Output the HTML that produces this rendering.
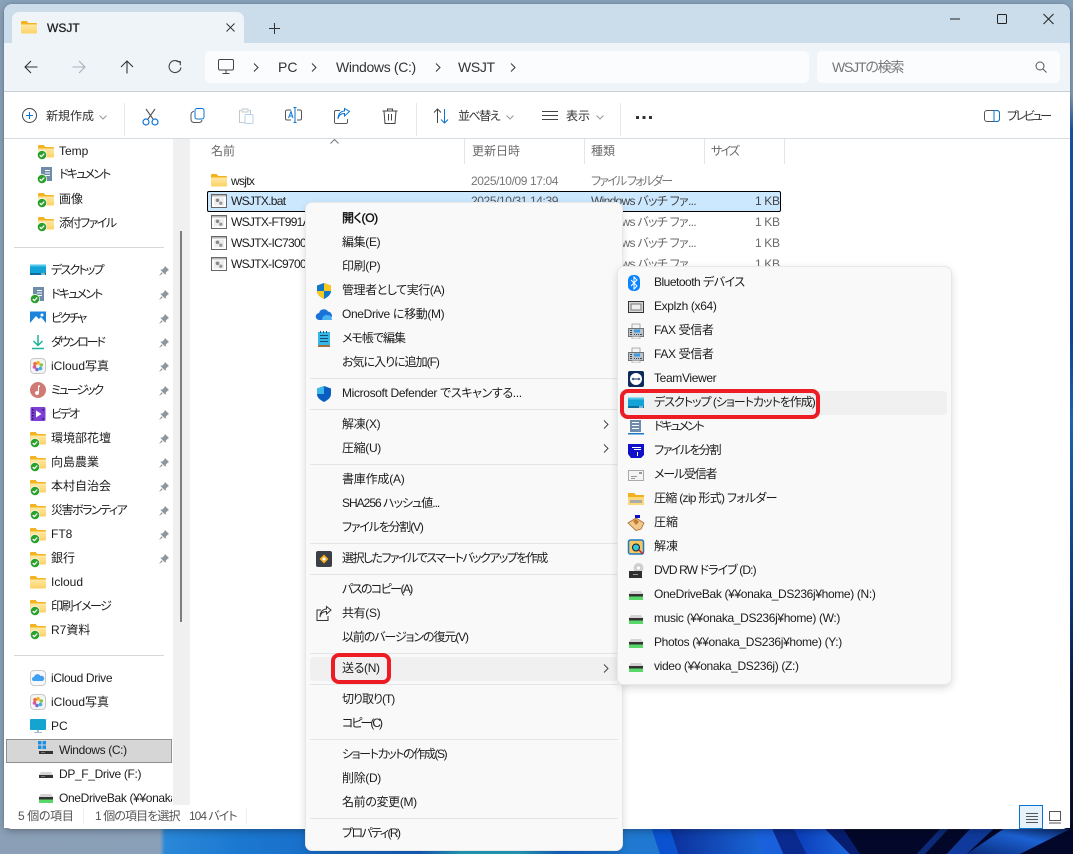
<!DOCTYPE html>
<html lang="ja"><head><meta charset="utf-8"><title>WSJT</title>
<style>
html,body{margin:0;padding:0}
body{width:1073px;height:854px;overflow:hidden;position:relative;background:#8ba3ba;font-family:"Liberation Sans","Noto Sans CJK JP",sans-serif;font-size:12px;color:#1c1c1c;font-feature-settings:"palt"}
div,svg,span.t{position:absolute}
.t{position:absolute;white-space:nowrap;line-height:16px;height:16px}
.g{color:#6a6a6a}
.h{color:#555}
.i{width:16px;height:16px}
.m{background:#e5e5e5;height:1px}
.a{letter-spacing:-.35px}
.b{letter-spacing:-.7px}
.c{letter-spacing:-1px}
.d{letter-spacing:-1.2px}
.e{letter-spacing:-1.5px}
.f{letter-spacing:-1.8px}
.j{letter-spacing:-2.1px}
svg{overflow:visible}
</style></head><body>
<svg width="0" height="0" style="position:absolute"><defs>
<linearGradient id="fg" x1="0" y1="0" x2="0" y2="1"><stop offset="0" stop-color="#ffe9a6"/><stop offset="1" stop-color="#fdd164"/></linearGradient>
<symbol id="f" viewBox="0 0 16 16"><path d="M0 3a1 1 0 0 1 1-1h4.500l2 2H15a1 1 0 0 1 1 1V7H0z" fill="#f3b320"/><path d="M0 5.500h16v8a1 1 0 0 1-1 1H1a1 1 0 0 1-1-1z" fill="url(#fg)"/></symbol>
<symbol id="c" viewBox="0 0 10 10"><circle cx="5" cy="5" r="5" fill="#fff"/><circle cx="5" cy="5" r="4.300" fill="#2c9e2c"/><path d="M2.800 5.100l1.500 1.500 3-3" fill="none" stroke="#fff" stroke-width="1.200"/></symbol>
<symbol id="d" viewBox="0 0 16 16"><path d="M3 1h11v14H3z" fill="#6f8cab"/><path d="M7 4h5v1H7zM7 6.500h5v1H7zM6 9h6v1H6z" fill="#fff"/></symbol>
<symbol id="p" viewBox="0 0 12 12"><path d="M7 1l4 4-1.200.6-2 2.200-.3 2.200L2.200 4.800l2.200-.3 2-2zM3.500 7.200L1 11l3.800-2.500z" fill="#8d969d"/></symbol>
<symbol id="dk" viewBox="0 0 16 16"><path d="M0 2.500h16v10.500H0z" fill="#14a3d6"/><path d="M0 2.500h16v2H0z" fill="#4fc6e8"/><path d="M0 11h16v2H0z" fill="#0b6f9c"/><path d="M11 11.500h4v1h-4z" fill="#fff"/></symbol>
<symbol id="wb" viewBox="0 0 16 16"><path d="M0 1.500h16v13H0z" fill="#1b84dd"/><path d="M0 13l6-7 3 3 2-2 5 6v1.500H0z" fill="#fff"/><circle cx="12" cy="5" r="1.500" fill="#fff"/></symbol>
<symbol id="dl" viewBox="0 0 16 16"><path d="M8 1v10M3.500 7L8 11.500 12.500 7" fill="none" stroke="#1eb39c" stroke-width="1.500"/><path d="M2 14.500h12" stroke="#1eb39c" stroke-width="1.500"/></symbol>
<symbol id="ph" viewBox="0 0 16 16"><rect x=".5" y=".5" width="15" height="15" rx="3.500" fill="#f4f4f4" stroke="#c9c9c9"/><circle cx="8" cy="4.800" r="1.800" fill="#f3b320"/><circle cx="11.200" cy="7" r="1.800" fill="#8bc34a"/><circle cx="10.500" cy="10.500" r="1.800" fill="#3bb3d8"/><circle cx="7" cy="11.500" r="1.800" fill="#7a6bd0"/><circle cx="4.500" cy="9" r="1.800" fill="#d8559a"/><circle cx="5" cy="5.800" r="1.800" fill="#ef6b3f"/></symbol>
<symbol id="mu" viewBox="0 0 16 16"><circle cx="8" cy="8" r="8" fill="#d07a74"/><path d="M8 3.500h2V5H9v6a2 2 0 1 1-1-1.700z" fill="#fff"/></symbol>
<symbol id="vd" viewBox="0 0 16 16"><rect x=".5" y="1" width="15" height="14" rx="1.500" fill="#7d3fd3"/><path d="M6 4.500l5.500 3.500L6 11.500z" fill="#fff"/><path d="M2 3h1.500v1.500H2zM2 6h1.500v1.500H2zM2 9h1.500v1.500H2zM2 12h1.500v1.500H2zM12.500 3H14v1.500h-1.500zM12.500 12H14v1.500h-1.500z" fill="#2b1a55"/></symbol>
<symbol id="dr" viewBox="0 0 16 16"><path d="M3 6h10l2 3v3H1V9z" fill="#d4d4d4"/><path d="M1 9h14v3H1z" fill="#333"/><path d="M3 10h4v1H3z" fill="#777"/></symbol>
<symbol id="nd" viewBox="0 0 16 16"><path d="M3 4h10l2 2.500V8H1V6.500z" fill="#d4d4d4"/><path d="M1 7h14v2.500H1z" fill="#333"/><path d="M1 9.500h14V13H1z" fill="#58d868"/></symbol>
<symbol id="bat" viewBox="0 0 16 14"><path d="M.5.500h15v13H.5z" fill="#fff" stroke="#666"/><path d="M1 1h14v1.500H1z" fill="#b5b5b5"/><path d="M3 3.500h10v8H3z" fill="#eee"/><circle cx="6.500" cy="6.300" r="1.800" fill="#888"/><circle cx="9.800" cy="9.200" r="1.700" fill="#9a9a9a"/></symbol>
<symbol id="fx" viewBox="0 0 16 16"><path d="M4 1h8v5H4z" fill="#f4f4f4" stroke="#999" stroke-width=".8"/><path d="M.5 5.500h15v8H.5z" fill="#bcc3c8" stroke="#6f767b"/><path d="M6 6.500h6v3H6z" fill="#3d9ae0"/><path d="M2 7h2v1H2zM2 9h2v1H2zM2 11h2v1H2zM6 11h1v1H6zM8 11h1v1H8zM10 11h1v1h-1zM12 11h2v1h-2z" fill="#444"/><path d="M4 13.500h8V16H4z" fill="#eee" stroke="#999" stroke-width=".6"/></symbol>
<linearGradient id="b1" x1="0" y1="0" x2="1" y2="0"><stop offset="0" stop-color="#0b2f9a"/><stop offset="1" stop-color="#1a68d8"/></linearGradient>
<linearGradient id="b2" x1="0" y1="0" x2="1" y2="0"><stop offset="0" stop-color="#0a3ab8"/><stop offset="1" stop-color="#1c66dc"/></linearGradient>
<linearGradient id="b3" x1="0" y1="1" x2="1" y2="0"><stop offset="0" stop-color="#0a2a78"/><stop offset=".6" stop-color="#1c62d4"/><stop offset="1" stop-color="#0b2560"/></linearGradient>
</defs></svg>

<!-- wallpaper -->
<div style="left:1068px;top:0;width:5px;height:854px;background:linear-gradient(#89a3bb 0,#89a3bb 95px,#1857b4 130px,#0f4aa6 340px,#1b6fc4 420px,#0b3c8c 600px,#07183f 700px,#030a28 854px)"></div>
<div style="left:0;top:824px;width:1073px;height:30px;background:linear-gradient(90deg,#8ba0b6 0,#8aa0b8 160px,#2a88d8 165px,#1b78d0 240px,#1560c0 420px,#25a0c0 460px,#25a0c0 520px,#1566c8 560px,#1c78d4 640px)"></div>
<svg style="left:620px;top:824px" width="453" height="30" viewBox="0 0 1359 90"><path d="M660 0h699v90H660z" fill="#03082a"/><path d="M0 0h90l30 90H0z" fill="#2078d0"/><path d="M90 0h55l30 90h-55z" fill="#0a52d0"/><path d="M145 0h255l40 90H175z" fill="url(#b1)"/><path d="M400 0h50l40 90h-55z" fill="#1a60dc"/><path d="M450 0h65l45 90h-70z" fill="#0a2a90"/><path d="M515 0h85l90 90H560z" fill="url(#b2)"/><path d="M600 0h60l60 90h-30z" fill="#071d70"/><path d="M960 15h25l-70 75h-25z" fill="#0c2a78"/><path d="M1050 15h70l-80 75h-60z" fill="#0f3a9c"/><path d="M1150 15h200l-150 75h-160z" fill="url(#b3)"/></svg>
<div style="left:0;top:0;width:1073px;height:3px;background:#87a2ba"></div>

<!-- window -->
<div style="left:4px;top:4px;width:1066px;height:825px;background:#fff;border-radius:8px;overflow:hidden;box-shadow:0 0 1px #5b6b7a,0 2px 8px rgba(0,0,0,.3)"></div>
<div style="left:4px;top:4px;width:1066px;height:39px;background:#cbdcea;border-radius:8px 8px 0 0"></div>
<div style="left:4px;top:43px;width:1066px;height:48px;background:#eff4f9;border-bottom:1px solid #c5d0d9"></div>
<div style="left:12px;top:12px;width:232px;height:32px;background:#eff4f9;border-radius:7px 7px 0 0"></div>
<svg class="i" style="left:21px;top:19px"><use href="#f"/></svg>
<span class="t" style="left:47px;top:20px;color:#222;-webkit-text-stroke:.3px #222">WSJT</span>
<svg style="left:226px;top:23px" width="10" height="10"><path d="M.5.500l8 8M8.500.500l-8 8" stroke="#333" stroke-width="1"/></svg>
<svg style="left:269px;top:23px" width="11" height="11"><path d="M5.500 0v11M0 5.500h11" stroke="#333" stroke-width="1"/></svg>
<svg style="left:950px;top:13px" width="108" height="12"><path d="M0 6h10" stroke="#222" stroke-width="1"/><rect x="47.500" y="1.500" width="9" height="9" rx="1" fill="none" stroke="#222" stroke-width="1"/><path d="M93.500 1l10 10M103.500 1l-10 10" stroke="#222" stroke-width="1"/></svg>

<!-- nav -->
<svg style="left:24px;top:60px" width="14" height="14"><path d="M13.500 7H1M7 1L1 7l6 6" fill="none" stroke="#333" stroke-width="1.100"/></svg>
<svg style="left:72px;top:60px" width="14" height="14"><path d="M.5 7H13M7 1l6 6-6 6" fill="none" stroke="#a9b0b6" stroke-width="1.100"/></svg>
<svg style="left:120px;top:60px" width="14" height="14"><path d="M7 13.500V1M1 7l6-6 6 6" fill="none" stroke="#333" stroke-width="1.100"/></svg>
<svg style="left:168px;top:60px" width="14" height="14"><path d="M11.500 2.500A6 6 0 1 0 13 7.500M8.500 1.500h3.800v3.800" fill="none" stroke="#444" stroke-width="1.100"/></svg>
<div style="left:205px;top:51px;width:604px;height:32px;background:#fbfcfe;border-radius:5px"></div>
<div style="left:817px;top:51px;width:243px;height:32px;background:#fbfcfe;border-radius:5px"></div>
<svg style="left:218px;top:59px" width="16" height="16"><rect x=".5" y=".5" width="15" height="10.500" rx="1.500" fill="none" stroke="#444"/><path d="M8 11v3M4.500 14.500h7" stroke="#444"/></svg>
<svg style="left:253px;top:63px" width="6" height="9"><path d="M1 .5l4 4-4 4" fill="none" stroke="#333"/></svg>
<span class="t" style="left:278px;top:59px;font-size:14px;color:#333">PC</span>
<svg style="left:311px;top:63px" width="6" height="9"><path d="M1 .5l4 4-4 4" fill="none" stroke="#333"/></svg>
<span class="t a" style="left:336px;top:59px;font-size:14px;color:#333">Windows (C:)</span>
<svg style="left:435px;top:63px" width="6" height="9"><path d="M1 .5l4 4-4 4" fill="none" stroke="#333"/></svg>
<span class="t a" style="left:458px;top:59px;font-size:14px;color:#333">WSJT</span>
<svg style="left:510px;top:63px" width="6" height="9"><path d="M1 .5l4 4-4 4" fill="none" stroke="#333"/></svg>
<span class="t d" style="left:832px;top:59px;font-size:14px;color:#777">WSJTの検索</span>
<svg style="left:1035px;top:61px" width="12" height="12"><circle cx="5" cy="5" r="4" fill="none" stroke="#555"/><path d="M8 8l3.500 3.500" stroke="#555"/></svg>

<!-- command bar -->
<div style="left:4px;top:138px;width:1066px;height:1px;background:#d5dde3"></div>
<svg class="i" style="left:22px;top:108px"><circle cx="7.500" cy="7.500" r="7" fill="none" stroke="#444"/><path d="M7.500 4v7M4 7.500h7" stroke="#0a74d4" stroke-width="1.100"/></svg>
<span class="t" style="left:46px;top:108px;color:#333">新規作成</span>
<svg style="left:99px;top:115px" width="8" height="5"><path d="M.5.500l3.500 3.500L7.500.500" fill="none" stroke="#999"/></svg>
<div style="left:124px;top:103px;width:1px;height:33px;background:#e6e6e6"></div>
<svg class="i" style="left:142px;top:108px;width:18px;height:18px"><path d="M4 1l7 10M13 1L6 11" fill="none" stroke="#555" stroke-width="1.100"/><circle cx="4" cy="14" r="3" fill="none" stroke="#0a74d4" stroke-width="1.200"/><circle cx="13" cy="14" r="3" fill="none" stroke="#0a74d4" stroke-width="1.200"/></svg>
<svg class="i" style="left:190px;top:108px"><rect x="5" y=".5" width="9" height="10.500" rx="2" fill="none" stroke="#0a74d4"/><path d="M4 3.500a3 3 0 0 0-3 3v5a3 3 0 0 0 3 3h5a3 3 0 0 0 3-2.500" fill="none" stroke="#555"/></svg>
<svg class="i" style="left:238px;top:108px"><path d="M3 2.500H1.500v12h5M11 2.500h1.500V6" fill="none" stroke="#c3c8cc"/><rect x="4" y="1" width="6" height="3" fill="none" stroke="#c3c8cc"/><rect x="7" y="6.500" width="8" height="9" rx="1" fill="none" stroke="#b5d3ec"/></svg>
<svg class="i" style="left:285px;top:107px;width:18px;height:18px"><path d="M6 3H2a1.500 1.500 0 0 0-1.500 1.500v7A1.500 1.500 0 0 0 2 13h4M12 3h3a1.500 1.500 0 0 1 1.500 1.500v7A1.500 1.500 0 0 1 15 13h-3" fill="none" stroke="#555"/><path d="M10 .5v15M8.500.500h3M8.500 15.500h3" stroke="#0a74d4" fill="none"/><path d="M3.500 11L6 4.500 8 11M4.300 9h3" fill="none" stroke="#0a74d4"/></svg>
<svg class="i" style="left:334px;top:108px"><path d="M6 2.500H2A1.500 1.500 0 0 0 .5 4v10A1.500 1.500 0 0 0 2 15.500h10a1.500 1.500 0 0 0 1.500-1.500v-3" fill="none" stroke="#555"/><path d="M4 11c.5-3.500 3-5.500 6.500-5.500V8l5-4.500L10.500 .5V3C7 3 4 6 4 11z" fill="none" stroke="#0a74d4"/></svg>
<svg class="i" style="left:382px;top:108px"><path d="M.5 3h15M5.500 3V1h5v2M2 3l1 12.500h10L14 3M6.500 6v6.500M9.500 6v6.500" fill="none" stroke="#444"/></svg>
<div style="left:416px;top:103px;width:1px;height:33px;background:#e6e6e6"></div>
<svg class="i" style="left:433px;top:108px"><path d="M4.500 15V1M1 4.500l3.500-3.500L8 4.500" fill="none" stroke="#444"/><path d="M11.500 1v14M8 11.500l3.500 3.500 3.500-3.500" fill="none" stroke="#0a74d4"/></svg>
<span class="t e" style="left:458px;top:108px;color:#333">並べ替え</span>
<svg style="left:506px;top:115px" width="8" height="5"><path d="M.5.500l3.500 3.500L7.500.500" fill="none" stroke="#999"/></svg>
<svg class="i" style="left:542px;top:108px"><path d="M0 3.500h16M0 7.500h16M0 11.500h16" stroke="#444"/></svg>
<span class="t" style="left:566px;top:108px;color:#333">表示</span>
<svg style="left:596px;top:115px" width="8" height="5"><path d="M.5.500l3.500 3.500L7.500.500" fill="none" stroke="#999"/></svg>
<div style="left:620px;top:103px;width:1px;height:33px;background:#e6e6e6"></div>
<svg style="left:636px;top:116px" width="16" height="3"><path d="M0 0h3v3H0zM6.500 0h3v3h-3zM13 0h3v3h-3z" fill="#333"/></svg>
<svg class="i" style="left:984px;top:108px"><rect x=".5" y="2.500" width="15" height="11" rx="2.500" fill="none" stroke="#555"/><path d="M10 2.500h3a2.500 2.500 0 0 1 2.500 2.500v6a2.500 2.500 0 0 1-2.500 2.500h-3z" fill="none" stroke="#0a74d4"/></svg>
<span class="t" style="left:1007px;top:108px;color:#333;letter-spacing:-2.4px">プレビュー</span>

<!-- sidebar scroll -->
<div style="left:173px;top:139px;width:16px;height:666px;background:#f0f0f0"></div>
<div style="left:180px;top:231px;width:2px;height:391px;background:#7e7e7e"></div>
<div style="left:189px;top:139px;width:1px;height:666px;background:#f2f2f2"></div>

<!-- sidebar items -->
<svg class="i" style="left:38px;top:143px"><use href="#f"/></svg><svg style="left:37px;top:150px" width="10" height="10"><use href="#c"/></svg><span class="t" style="left:59px;top:143px">Temp</span>
<svg class="i" style="left:38px;top:166px"><use href="#d"/></svg><svg style="left:37px;top:174px" width="10" height="10"><use href="#c"/></svg><span class="t f" style="left:59px;top:166px">ドキュメント</span>
<svg class="i" style="left:38px;top:191px"><use href="#f"/></svg><svg style="left:37px;top:198px" width="10" height="10"><use href="#c"/></svg><span class="t" style="left:59px;top:191px">画像</span>
<svg class="i" style="left:38px;top:215px"><use href="#f"/></svg><svg style="left:37px;top:222px" width="10" height="10"><use href="#c"/></svg><span class="t e" style="left:59px;top:215px">添付ファイル</span>
<div style="left:14px;top:247px;width:150px;height:1px;background:#d8d8d8"></div>

<svg class="i" style="left:30px;top:262px"><use href="#dk"/></svg><span class="t f" style="left:51px;top:262px">デスクトップ</span>
<svg class="i" style="left:30px;top:286px"><use href="#d"/></svg><svg style="left:30px;top:294px" width="10" height="10"><use href="#c"/></svg><span class="t f" style="left:51px;top:286px">ドキュメント</span>
<svg class="i" style="left:30px;top:310px"><use href="#wb"/></svg><span class="t j" style="left:51px;top:310px">ピクチャ</span>
<svg class="i" style="left:30px;top:334px"><use href="#dl"/></svg><span class="t j" style="left:51px;top:334px">ダウンロード</span>
<svg class="i" style="left:30px;top:358px"><use href="#ph"/></svg><span class="t" style="left:51px;top:358px">iCloud写真</span>
<svg class="i" style="left:30px;top:382px"><use href="#mu"/></svg><span class="t j" style="left:51px;top:382px">ミュージック</span>
<svg class="i" style="left:30px;top:406px"><use href="#vd"/></svg><span class="t j" style="left:51px;top:406px">ビデオ</span>
<svg class="i" style="left:30px;top:430px"><use href="#f"/></svg><svg style="left:30px;top:438px" width="10" height="10"><use href="#c"/></svg><span class="t" style="left:51px;top:430px">環境部花壇</span>
<svg class="i" style="left:30px;top:454px"><use href="#f"/></svg><svg style="left:30px;top:462px" width="10" height="10"><use href="#c"/></svg><span class="t" style="left:51px;top:454px">向島農業</span>
<svg class="i" style="left:30px;top:478px"><use href="#f"/></svg><svg style="left:30px;top:486px" width="10" height="10"><use href="#c"/></svg><span class="t" style="left:51px;top:478px">本村自治会</span>
<svg class="i" style="left:30px;top:502px"><use href="#f"/></svg><svg style="left:30px;top:510px" width="10" height="10"><use href="#c"/></svg><span class="t e" style="left:51px;top:502px">災害ボランティア</span>
<svg class="i" style="left:30px;top:526px"><use href="#f"/></svg><svg style="left:30px;top:534px" width="10" height="10"><use href="#c"/></svg><span class="t" style="left:51px;top:526px">FT8</span>
<svg class="i" style="left:30px;top:550px"><use href="#f"/></svg><svg style="left:30px;top:558px" width="10" height="10"><use href="#c"/></svg><span class="t" style="left:51px;top:550px">銀行</span>
<svg class="i" style="left:30px;top:574px"><use href="#f"/></svg><span class="t" style="left:51px;top:574px">Icloud</span>
<svg class="i" style="left:30px;top:598px"><use href="#f"/></svg><svg style="left:30px;top:606px" width="10" height="10"><use href="#c"/></svg><span class="t e" style="left:51px;top:598px">印刷イメージ</span>
<svg class="i" style="left:30px;top:622px"><use href="#f"/></svg><svg style="left:30px;top:630px" width="10" height="10"><use href="#c"/></svg><span class="t" style="left:51px;top:622px">R7資料</span>
<svg width="12" height="12" style="left:158px;top:265px"><use href="#p"/></svg>
<svg width="12" height="12" style="left:158px;top:289px"><use href="#p"/></svg>
<svg width="12" height="12" style="left:158px;top:313px"><use href="#p"/></svg>
<svg width="12" height="12" style="left:158px;top:337px"><use href="#p"/></svg>
<svg width="12" height="12" style="left:158px;top:361px"><use href="#p"/></svg>
<svg width="12" height="12" style="left:158px;top:385px"><use href="#p"/></svg>
<svg width="12" height="12" style="left:158px;top:409px"><use href="#p"/></svg>
<svg width="12" height="12" style="left:158px;top:433px"><use href="#p"/></svg>
<svg width="12" height="12" style="left:158px;top:457px"><use href="#p"/></svg>
<svg width="12" height="12" style="left:158px;top:481px"><use href="#p"/></svg>
<svg width="12" height="12" style="left:158px;top:505px"><use href="#p"/></svg>
<svg width="12" height="12" style="left:158px;top:529px"><use href="#p"/></svg>
<svg width="12" height="12" style="left:158px;top:553px"><use href="#p"/></svg>
<div style="left:14px;top:655px;width:150px;height:1px;background:#d8d8d8"></div>
<svg class="i" style="left:30px;top:670px"><rect x=".5" y=".5" width="15" height="15" rx="3.500" fill="#f6f8fb" stroke="#c9c9c9"/><path d="M4 11a2 2 0 0 1 0-4 3.500 3.500 0 0 1 6.500-1A2.600 2.600 0 0 1 12.500 11z" fill="#3f9ff0"/></svg><span class="t a" style="left:51px;top:670px">iCloud Drive</span>
<svg class="i" style="left:30px;top:694px"><use href="#ph"/></svg><span class="t" style="left:51px;top:694px">iCloud写真</span>
<svg class="i" style="left:30px;top:718px"><rect x="0" y="1" width="16" height="11" rx="1" fill="#15a4d0"/><path d="M7 12h2v2h3v1H4v-1h3z" fill="#a9bcc9"/></svg><span class="t" style="left:51px;top:718px">PC</span>
<div style="left:6px;top:739px;width:164px;height:22px;background:#d6d6d6;border:1px solid #8f8f8f"></div>
<svg class="i" style="left:38px;top:742px"><use href="#dr"/></svg><svg style="left:38px;top:741px" width="8" height="8"><path d="M0 0h3.500v3.500H0zM4.500 0H8v3.500H4.500zM0 4.500h3.500V8H0zM4.500 4.500H8V8H4.500z" fill="#1e8ee0"/></svg><span class="t a" style="left:59px;top:742px">Windows (C:)</span>
<svg class="i" style="left:38px;top:766px"><use href="#dr"/></svg><span class="t a" style="left:59px;top:766px">DP_F_Drive (F:)</span>
<svg class="i" style="left:38px;top:790px"><use href="#nd"/></svg><span class="t a" style="left:59px;top:790px;width:113px;overflow:hidden">OneDriveBak (¥¥onaka_DS236j¥home) (N:)</span>

<!-- list header -->
<svg style="left:330px;top:139px" width="9" height="5"><path d="M.5 4.500L4.500.500l4 4" fill="none" stroke="#777"/></svg>
<span class="t g" style="left:211px;top:143px">名前</span>
<div style="left:464px;top:139px;width:1px;height:25px;background:#e5e5e5"></div>
<span class="t g" style="left:472px;top:143px">更新日時</span>
<div style="left:584px;top:139px;width:1px;height:25px;background:#e5e5e5"></div>
<span class="t g" style="left:591px;top:143px">種類</span>
<div style="left:704px;top:139px;width:1px;height:25px;background:#e5e5e5"></div>
<span class="t g f" style="left:711px;top:143px">サイズ</span>
<div style="left:784px;top:139px;width:1px;height:25px;background:#e5e5e5"></div>

<svg class="i" style="left:211px;top:172px"><use href="#f"/></svg>
<span class="t b" style="left:231px;top:173px">wsjtx</span>
<span class="t g" style="left:471px;top:173px;color:#777;letter-spacing:-.4px">2025/10/09 17:04</span>
<span class="t g f" style="left:591px;top:173px;color:#777">ファイル フォルダー</span>

<div style="left:207px;top:191px;width:572px;height:19px;background:#cce8ff;border:1px solid #000;border-radius:2px"></div>
<svg width="16" height="14" style="left:211px;top:194px"><use href="#bat"/></svg>
<span class="t b" style="left:231px;top:193px">WSJTX.bat</span>
<span class="t g" style="left:471px;top:193px;color:#555;letter-spacing:-.4px">2025/10/31 14:39</span>
<span class="t b" style="left:591px;top:193px;color:#444">Windows バッチ ファ...</span>
<span class="t a" style="left:755px;top:193px;color:#444">1 KB</span>

<svg width="16" height="14" style="left:211px;top:215px"><use href="#bat"/></svg><span class="t b" style="left:231px;top:214px">WSJTX-FT991A.bat</span>
<span class="t g b" style="left:591px;top:214px">Windows バッチ ファ...</span><span class="t g a" style="left:755px;top:214px">1 KB</span>
<svg width="16" height="14" style="left:211px;top:236px"><use href="#bat"/></svg><span class="t b" style="left:231px;top:235px">WSJTX-IC7300.bat</span>
<span class="t g b" style="left:591px;top:235px">Windows バッチ ファ...</span><span class="t g a" style="left:755px;top:235px">1 KB</span>
<svg width="16" height="14" style="left:211px;top:257px"><use href="#bat"/></svg><span class="t b" style="left:231px;top:256px">WSJTX-IC9700.bat</span>
<span class="t g b" style="left:591px;top:256px">Windows バッチ ファ...</span><span class="t g a" style="left:755px;top:256px">1 KB</span>

<!-- status -->
<div style="left:4px;top:805px;width:1066px;height:23px;background:#fff"></div>
<span class="t h a" style="left:18px;top:808px">5 個の項目</span>
<div style="left:83px;top:808px;width:1px;height:16px;background:#eee"></div>
<span class="t h" style="left:95px;top:808px;letter-spacing:-.9px">1 個の項目を選択</span>
<span class="t h c" style="left:189px;top:808px">104 バイト</span>
<div style="left:246px;top:808px;width:1px;height:16px;background:#eee"></div>
<div style="left:1019px;top:805px;width:22px;height:22px;background:#e5f1fb;border:1px solid #0a74d4"></div>
<svg style="left:1026px;top:813px" width="12" height="11"><path d="M0 .5h12M0 3.500h12M0 6.500h12M0 9.500h12" stroke="#555"/></svg>
<svg style="left:1049px;top:811px" width="12" height="14"><rect x=".5" y=".5" width="11" height="9" fill="none" stroke="#555"/><path d="M0 12h12" stroke="#555"/></svg>

<!-- context menu -->
<div style="left:306px;top:203px;width:316px;height:647px;background:#f9f9f9;border-radius:6px;box-shadow:0 0 0 1px #e8e8e8,0 3px 9px rgba(0,0,0,.18)"></div>
<span class="t a" style="left:342px;top:210px;-webkit-text-stroke:.4px #111;color:#111">開く(O)</span>
<span class="t a" style="left:342px;top:234px">編集(E)</span>
<span class="t a" style="left:342px;top:258px">印刷(P)</span>
<svg class="i" style="left:316px;top:283px"><path d="M8 0l7 2.500V8c0 3.500-3 6-7 8-4-2-7-4.500-7-8V2.500z" fill="#0f78c8"/><path d="M8 0l7 2.500V8H8zM8 8v8c-4-2-7-4.500-7-8z" fill="#f8c81e"/></svg>
<span class="t" style="left:342px;top:282px;letter-spacing:-.45px">管理者として実行(A)</span>
<svg class="i" style="left:316px;top:307px"><path d="M3.500 13A3.500 3.500 0 0 1 3 6a5 5 0 0 1 9-1.500A4.300 4.300 0 0 1 12.500 13z" fill="#1a73d9"/><path d="M6 13c0-3 2-5 5-5s5 2 5 5z" fill="#4bb4f0"/></svg>
<span class="t a" style="left:342px;top:306px">OneDrive に移動(M)</span>
<svg class="i" style="left:317px;top:331px;width:14px"><path d="M1 1h12v14H1z" fill="#35b8e8"/><path d="M1 14h12v2H1z" fill="#a2713b"/><path d="M3 0h1v2H3zM6 0h1v2H6zM9 0h1v2H9zM3 4h8v1H3zM3 7h8v1H3zM3 10h8v1H3z" fill="#174d75"/></svg>
<span class="t c" style="left:342px;top:330px">メモ帳で編集</span>
<span class="t c" style="left:342px;top:354px">お気に入りに追加(F)</span>
<div class="m" style="left:310px;top:378px;width:308px"></div>
<svg class="i" style="left:316px;top:386px"><path d="M8 0l7 2.500V8c0 3.500-3 6-7 8-4-2-7-4.500-7-8V2.500z" fill="#0b5cc0"/><path d="M1 2.500L8 0v8H1z" fill="#3cb8e8"/></svg>
<span class="t a" style="left:342px;top:385px">Microsoft Defender でスキャンする...</span>
<div class="m" style="left:310px;top:409px;width:308px"></div>
<span class="t a" style="left:342px;top:416px">解凍(X)</span>
<svg style="left:603px;top:420px" width="6" height="9"><path d="M1 .5l4 4-4 4" fill="none" stroke="#444"/></svg>
<span class="t a" style="left:342px;top:440px">圧縮(U)</span>
<svg style="left:603px;top:444px" width="6" height="9"><path d="M1 .5l4 4-4 4" fill="none" stroke="#444"/></svg>
<div class="m" style="left:310px;top:464px;width:308px"></div>
<span class="t" style="left:342px;top:471px;letter-spacing:-.2px">書庫作成(A)</span>
<span class="t c" style="left:342px;top:495px">SHA256 ハッシュ値...</span>
<span class="t d" style="left:342px;top:519px">ファイルを分割(V)</span>
<div class="m" style="left:310px;top:543px;width:308px"></div>
<svg class="i" style="left:316px;top:551px"><rect width="16" height="16" rx="2" fill="#3a4046"/><path d="M8 3.500L12.500 8 8 12.500 3.500 8z" fill="#f3a81e"/><path d="M8 6l2 2-2 2-2-2z" fill="#fff"/></svg>
<span class="t" style="left:342px;top:550px;letter-spacing:-1.55px">選択したファイルでスマートバックアップを作成</span>
<div class="m" style="left:310px;top:574px;width:308px"></div>
<span class="t" style="left:342px;top:581px;letter-spacing:-1.6px">パスのコピー(A)</span>
<svg class="i" style="left:316px;top:606px"><path d="M5 4H1v10.500h11V10" fill="none" stroke="#333"/><path d="M4 11c.5-3.500 3-5.500 6.500-5.500V8L15 4 10.500 .5V3C7 3 4 6 4 11z" fill="none" stroke="#333"/></svg>
<span class="t a" style="left:342px;top:605px">共有(S)</span>
<span class="t" style="left:342px;top:629px;letter-spacing:-1.1px">以前のバージョンの復元(V)</span>
<div class="m" style="left:310px;top:653px;width:308px"></div>
<div style="left:310px;top:657px;width:308px;height:24px;background:#f0f0f0;border-radius:4px"></div>
<span class="t a" style="left:342px;top:660px">送る(N)</span>
<svg style="left:603px;top:664px" width="6" height="9"><path d="M1 .5l4 4-4 4" fill="none" stroke="#444"/></svg>
<div style="left:331px;top:653px;width:52px;height:23px;border:4px solid #ed1c24;border-radius:8px"></div>
<div class="m" style="left:310px;top:684px;width:308px"></div>
<span class="t c" style="left:342px;top:691px">切り取り(T)</span>
<span class="t" style="left:342px;top:715px;letter-spacing:-2px">コピー(C)</span>
<div class="m" style="left:310px;top:739px;width:308px"></div>
<span class="t" style="left:342px;top:746px;letter-spacing:-1.4px">ショートカットの作成(S)</span>
<span class="t a" style="left:342px;top:770px">削除(D)</span>
<span class="t a" style="left:342px;top:794px">名前の変更(M)</span>
<div class="m" style="left:310px;top:818px;width:308px"></div>
<span class="t" style="left:342px;top:825px;letter-spacing:-1.6px">プロパティ(R)</span>

<!-- submenu -->
<div style="left:618px;top:267px;width:333px;height:417px;background:#f9f9f9;border-radius:6px;box-shadow:0 0 0 1px #e8e8e8,0 3px 9px rgba(0,0,0,.18)"></div>
<svg class="i" style="left:628px;top:275px;width:12px"><rect width="12" height="16" rx="5" fill="#0a84ff"/><path d="M3 5l6 6-3 3V2l3 3-6 6" fill="none" stroke="#fff"/></svg>
<span class="t" style="left:654px;top:274px;letter-spacing:-.5px">Bluetooth デバイス</span>
<svg class="i" style="left:628px;top:299px"><path d="M.5 2.500h15v11H.5z" fill="#d9d9d9" stroke="#333"/><path d="M3 5h10v6H3z" fill="#eee" stroke="#777"/></svg>
<span class="t a" style="left:654px;top:298px">Explzh (x64)</span>
<svg class="i" style="left:628px;top:323px"><use href="#fx"/></svg>
<span class="t a" style="left:654px;top:322px">FAX 受信者</span>
<svg class="i" style="left:628px;top:347px"><use href="#fx"/></svg>
<span class="t a" style="left:654px;top:346px">FAX 受信者</span>
<svg class="i" style="left:628px;top:371px"><rect width="16" height="16" rx="2" fill="#0e2a5c"/><circle cx="8" cy="8" r="6" fill="#fff"/><path d="M3.500 8l2-1.500v1h5v-1l2 1.500-2 1.500v-1h-5v1z" fill="#0e2a5c"/></svg>
<span class="t a" style="left:654px;top:370px">TeamViewer</span>
<div style="left:620px;top:391px;width:327px;height:24px;background:#f0f0f0;border-radius:4px"></div>
<svg class="i" style="left:628px;top:395px"><use href="#dk"/></svg>
<span class="t c" style="left:654px;top:394px">デスクトップ (ショートカットを作成)</span>
<div style="left:620px;top:389px;width:192px;height:22px;border:4px solid #ed1c24;border-radius:8px"></div>
<svg class="i" style="left:628px;top:419px"><path d="M2 1h11v12H2z" fill="#6f8cab"/><path d="M4 3h7v1H4zM4 6h7v1H4zM4 9h7v1H4z" fill="#fff"/><path d="M0 14h16v1.500H0z" fill="#1c78c8"/></svg>
<span class="t j" style="left:654px;top:418px">ドキュメント</span>
<svg class="i" style="left:628px;top:443px"><path d="M0 1h16v11l-3 3H3l-3-4z" fill="#1010c8"/><path d="M4 4h9v1H4zM6 6h7v1H6zM9 9h1v4H9z" fill="#fff"/></svg>
<span class="t e" style="left:654px;top:442px">ファイルを分割</span>
<svg class="i" style="left:628px;top:467px"><path d="M.5 3.500h15v10H.5z" fill="#f4f4f4" stroke="#aaa"/><path d="M3 9h6v1H3zM3 11h4v1H3zM11 5h3v2h-3z" fill="#999"/></svg>
<span class="t d" style="left:654px;top:466px">メール受信者</span>
<svg class="i" style="left:628px;top:491px"><path d="M0 2h6l2 2h8v3H0z" fill="#f0b020"/><path d="M0 6h16v8H0z" fill="#fbd97a"/><path d="M2 9h12v3H2z" fill="#aaa"/></svg>
<span class="t b" style="left:654px;top:490px">圧縮 (zip 形式) フォルダー</span>
<svg class="i" style="left:628px;top:515px"><path d="M0 8l8-5 8 5-3 6-5 1.500z" fill="#f2c78a" stroke="#a8692a" stroke-width=".8"/><path d="M5 6l3-2 3 3-3 3z" fill="#c27a30"/><path d="M7 0h5v3H7z" fill="#1010c8"/></svg>
<span class="t" style="left:654px;top:514px">圧縮</span>
<svg class="i" style="left:628px;top:539px"><rect x=".5" y="1" width="15" height="14" rx="2" fill="#f6c860" stroke="#1a7ac8" stroke-width="1.500"/><circle cx="8" cy="8.500" r="3.500" fill="#35c4d8" stroke="#123"/><path d="M11 11l4 4" stroke="#d81a2a" stroke-width="1.500"/></svg>
<span class="t" style="left:654px;top:538px">解凍</span>
<svg class="i" style="left:628px;top:563px"><circle cx="10.500" cy="5" r="5" fill="#cfcfcf"/><circle cx="10.500" cy="5" r="1.500" fill="#fff"/><path d="M1 8h13v7H1z" fill="#2f2f2f"/><path d="M5 11h5v1H5z" fill="#999"/></svg>
<span class="t" style="left:654px;top:562px;letter-spacing:-.9px">DVD RW ドライブ (D:)</span>
<svg class="i" style="left:628px;top:587px"><use href="#nd"/></svg>
<span class="t a" style="left:654px;top:586px">OneDriveBak (¥¥onaka_DS236j¥home) (N:)</span>
<svg class="i" style="left:628px;top:611px"><use href="#nd"/></svg>
<span class="t a" style="left:654px;top:610px">music (¥¥onaka_DS236j¥home) (W:)</span>
<svg class="i" style="left:628px;top:635px"><use href="#nd"/></svg>
<span class="t a" style="left:654px;top:634px">Photos (¥¥onaka_DS236j¥home) (Y:)</span>
<svg class="i" style="left:628px;top:659px"><use href="#nd"/></svg>
<span class="t a" style="left:654px;top:658px">video (¥¥onaka_DS236j) (Z:)</span>
</body></html>
